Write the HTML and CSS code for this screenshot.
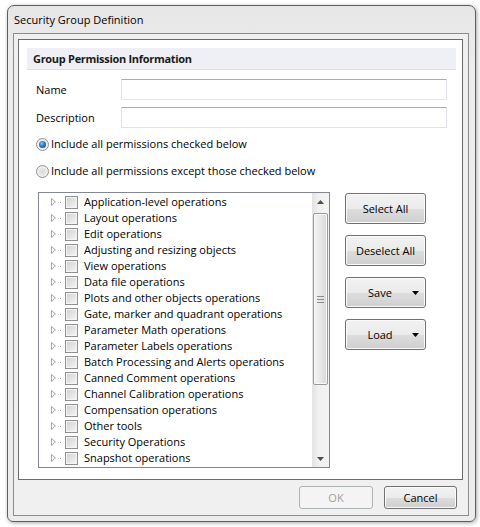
FILE: index.html
```html
<!DOCTYPE html>
<html>
<head>
<meta charset="utf-8">
<title>Security Group Definition</title>
<link rel="stylesheet" href="styles.css">
</head>
<body>
<div class="window">
  <div class="titlebar">Security Group Definition</div>
  <div class="client">
    <div class="panel">
      <div class="section-head">Group Permission Information</div>
      <div class="field-row name-row"><span class="field-label">Name</span><div class="input"></div></div>
      <div class="field-row desc-row"><span class="field-label">Description</span><div class="input"></div></div>
      <div class="radio-row r1"><span class="radio checked"></span><span class="radio-text">Include all permissions checked below</span></div>
      <div class="radio-row r2"><span class="radio"></span><span class="radio-text">Include all permissions except those checked below</span></div>
      <div class="perm-area">
        <div class="tree">
          <div class="tree-items">
            <div class="row"><svg class="exp" width="26" height="16" viewBox="0 0 26 16"><path d="M12.5 4.5 L16.5 8 L12.5 11.5 Z" fill="#fff" stroke="#a6a6a6"/><rect x="21" y="8" width="1" height="1" fill="#9a9a9a"/></svg><span class="check"></span><span class="label">Application-level operations</span></div>
            <div class="row"><svg class="exp" width="26" height="16" viewBox="0 0 26 16"><path d="M12.5 4.5 L16.5 8 L12.5 11.5 Z" fill="#fff" stroke="#a6a6a6"/><rect x="21" y="8" width="1" height="1" fill="#9a9a9a"/></svg><span class="check"></span><span class="label">Layout operations</span></div>
            <div class="row"><svg class="exp" width="26" height="16" viewBox="0 0 26 16"><path d="M12.5 4.5 L16.5 8 L12.5 11.5 Z" fill="#fff" stroke="#a6a6a6"/><rect x="21" y="8" width="1" height="1" fill="#9a9a9a"/></svg><span class="check"></span><span class="label">Edit operations</span></div>
            <div class="row"><svg class="exp" width="26" height="16" viewBox="0 0 26 16"><path d="M12.5 4.5 L16.5 8 L12.5 11.5 Z" fill="#fff" stroke="#a6a6a6"/><rect x="21" y="8" width="1" height="1" fill="#9a9a9a"/></svg><span class="check"></span><span class="label">Adjusting and resizing objects</span></div>
            <div class="row"><svg class="exp" width="26" height="16" viewBox="0 0 26 16"><path d="M12.5 4.5 L16.5 8 L12.5 11.5 Z" fill="#fff" stroke="#a6a6a6"/><rect x="21" y="8" width="1" height="1" fill="#9a9a9a"/></svg><span class="check"></span><span class="label">View operations</span></div>
            <div class="row"><svg class="exp" width="26" height="16" viewBox="0 0 26 16"><path d="M12.5 4.5 L16.5 8 L12.5 11.5 Z" fill="#fff" stroke="#a6a6a6"/><rect x="21" y="8" width="1" height="1" fill="#9a9a9a"/></svg><span class="check"></span><span class="label">Data file operations</span></div>
            <div class="row"><svg class="exp" width="26" height="16" viewBox="0 0 26 16"><path d="M12.5 4.5 L16.5 8 L12.5 11.5 Z" fill="#fff" stroke="#a6a6a6"/><rect x="21" y="8" width="1" height="1" fill="#9a9a9a"/></svg><span class="check"></span><span class="label">Plots and other objects operations</span></div>
            <div class="row"><svg class="exp" width="26" height="16" viewBox="0 0 26 16"><path d="M12.5 4.5 L16.5 8 L12.5 11.5 Z" fill="#fff" stroke="#a6a6a6"/><rect x="21" y="8" width="1" height="1" fill="#9a9a9a"/></svg><span class="check"></span><span class="label">Gate, marker and quadrant operations</span></div>
            <div class="row"><svg class="exp" width="26" height="16" viewBox="0 0 26 16"><path d="M12.5 4.5 L16.5 8 L12.5 11.5 Z" fill="#fff" stroke="#a6a6a6"/><rect x="21" y="8" width="1" height="1" fill="#9a9a9a"/></svg><span class="check"></span><span class="label">Parameter Math operations</span></div>
            <div class="row"><svg class="exp" width="26" height="16" viewBox="0 0 26 16"><path d="M12.5 4.5 L16.5 8 L12.5 11.5 Z" fill="#fff" stroke="#a6a6a6"/><rect x="21" y="8" width="1" height="1" fill="#9a9a9a"/></svg><span class="check"></span><span class="label">Parameter Labels operations</span></div>
            <div class="row"><svg class="exp" width="26" height="16" viewBox="0 0 26 16"><path d="M12.5 4.5 L16.5 8 L12.5 11.5 Z" fill="#fff" stroke="#a6a6a6"/><rect x="21" y="8" width="1" height="1" fill="#9a9a9a"/></svg><span class="check"></span><span class="label">Batch Processing and Alerts operations</span></div>
            <div class="row"><svg class="exp" width="26" height="16" viewBox="0 0 26 16"><path d="M12.5 4.5 L16.5 8 L12.5 11.5 Z" fill="#fff" stroke="#a6a6a6"/><rect x="21" y="8" width="1" height="1" fill="#9a9a9a"/></svg><span class="check"></span><span class="label">Canned Comment operations</span></div>
            <div class="row"><svg class="exp" width="26" height="16" viewBox="0 0 26 16"><path d="M12.5 4.5 L16.5 8 L12.5 11.5 Z" fill="#fff" stroke="#a6a6a6"/><rect x="21" y="8" width="1" height="1" fill="#9a9a9a"/></svg><span class="check"></span><span class="label">Channel Calibration operations</span></div>
            <div class="row"><svg class="exp" width="26" height="16" viewBox="0 0 26 16"><path d="M12.5 4.5 L16.5 8 L12.5 11.5 Z" fill="#fff" stroke="#a6a6a6"/><rect x="21" y="8" width="1" height="1" fill="#9a9a9a"/></svg><span class="check"></span><span class="label">Compensation operations</span></div>
            <div class="row"><svg class="exp" width="26" height="16" viewBox="0 0 26 16"><path d="M12.5 4.5 L16.5 8 L12.5 11.5 Z" fill="#fff" stroke="#a6a6a6"/><rect x="21" y="8" width="1" height="1" fill="#9a9a9a"/></svg><span class="check"></span><span class="label">Other tools</span></div>
            <div class="row"><svg class="exp" width="26" height="16" viewBox="0 0 26 16"><path d="M12.5 4.5 L16.5 8 L12.5 11.5 Z" fill="#fff" stroke="#a6a6a6"/><rect x="21" y="8" width="1" height="1" fill="#9a9a9a"/></svg><span class="check"></span><span class="label">Security Operations</span></div>
            <div class="row"><svg class="exp" width="26" height="16" viewBox="0 0 26 16"><path d="M12.5 4.5 L16.5 8 L12.5 11.5 Z" fill="#fff" stroke="#a6a6a6"/><rect x="21" y="8" width="1" height="1" fill="#9a9a9a"/></svg><span class="check"></span><span class="label">Snapshot operations</span></div>
          </div>
          <div class="scrollbar">
            <div class="sb-btn"><svg width="7" height="4" viewBox="0 0 7 4"><path d="M0 4 L3.5 0 L7 4 Z" fill="#4d4d4d"/></svg></div>
            <div class="sb-track">
              <div class="sb-thumb"><svg width="7" height="7" viewBox="0 0 7 7"><rect x="0" y="0" width="7" height="1" fill="#8a8a8a"/><rect x="0" y="3" width="7" height="1" fill="#8a8a8a"/><rect x="0" y="6" width="7" height="1" fill="#8a8a8a"/></svg></div>
            </div>
            <div class="sb-btn"><svg width="7" height="4" viewBox="0 0 7 4"><path d="M0 0 L7 0 L3.5 4 Z" fill="#4d4d4d"/></svg></div>
          </div>
        </div>
        <div class="side-buttons">
          <button class="btn">Select All</button>
          <button class="btn">Deselect All</button>
          <button class="btn split"><span class="btn-text">Save</span><svg class="drop" width="7" height="4" viewBox="0 0 7 4"><path d="M0 0 L7 0 L3.5 4 Z" fill="#000"/></svg></button>
          <button class="btn split"><span class="btn-text">Load</span><svg class="drop" width="7" height="4" viewBox="0 0 7 4"><path d="M0 0 L7 0 L3.5 4 Z" fill="#000"/></svg></button>
        </div>
      </div>
    </div>
    <div class="footer">
      <button class="btn foot-btn ok" disabled>OK</button>
      <button class="btn foot-btn">Cancel</button>
    </div>
  </div>
</div>
</body>
</html>
```

FILE: styles.css
```css
* { box-sizing: border-box; }
html, body { margin: 0; padding: 0; background: #ffffff; }
body {
  font-family: "Open Sans", "Noto Sans", sans-serif;
  font-size: 11px;
  color: #000;
  width: 480px;
  height: 527px;
  overflow: hidden;
}
.window {
  margin: 5px 0 0 7px;
  width: 469px;
  height: 517px;
  border: 1px solid #5d5d5d;
  border-radius: 7px 7px 6px 6px;
  background: linear-gradient(#e6e6e6, #ededed 60px, #ececec);
  box-shadow: 1px 1px 4px rgba(0,0,0,0.35);
  display: flex;
  flex-direction: column;
  padding: 0 6px 5px 5px;
}
.titlebar {
  height: 27px;
  line-height: 27px;
  padding-left: 1px;
  font-size: 11px;
  color: #000;
}
.client {
  flex: 1;
  border: 1px solid #8c8c8c;
  background: #f0f0f0;
  padding: 5px 0 0 4px;
  display: flex;
  flex-direction: column;
}
.panel {
  height: 441px;
  margin-right: 5px;
  border: 1px solid #6a6a6a;
  background: #ffffff;
  display: flex;
  flex-direction: column;
}
.section-head {
  margin: 8px 6px 0 8px;
  height: 22px;
  background: #eff0f5;
  border-bottom: 1px solid #e0e1e6;
  font-weight: bold;
  letter-spacing: -0.3px;
  padding-left: 6px;
  line-height: 21px;
  color: #1a1a1a;
}
.field-row {
  display: flex;
  align-items: center;
  height: 21px;
  margin-right: 15px;
}
.name-row { margin-top: 9px; }
.desc-row { margin-top: 7px; }
.field-label {
  width: 102px;
  padding-left: 17px;
}
.input {
  flex: 1;
  height: 21px;
  border: 1px solid #e2e3ea;
  border-top-color: #abadb3;
  background: #fff;
}
.radio-row {
  display: flex;
  align-items: center;
  height: 16px;
  padding-left: 17px;
}
.r1 { margin-top: 8px; }
.r2 { margin-top: 11px; }
.radio {
  width: 13px;
  height: 13px;
  border-radius: 50%;
  border: 1px solid #8e8f8f;
  background: radial-gradient(circle at 50% 50%, #d8d8d8 0, #eaeaea 50%, #f6f6f6 100%);
  box-shadow: inset 0 0 0 1px #f2f2f2;
  position: relative;
  flex: none;
}
.radio.checked::after {
  content: "";
  position: absolute;
  left: 2px;
  top: 2px;
  width: 7px;
  height: 7px;
  border-radius: 50%;
  background: radial-gradient(circle at 40% 35%, #8cc6f5 0, #2a77c9 45%, #0d4a94 100%);
}
.radio-text { margin-left: 2px; padding-bottom: 1px; }
.perm-area {
  display: flex;
  margin-top: 13px;
  margin-left: 19px;
}
.tree {
  width: 292px;
  height: 276px;
  border: 1px solid #828790;
  display: flex;
}
.tree-items {
  flex: 1;
  padding-top: 1px;
  overflow: hidden;
}
.row {
  height: 16px;
  display: flex;
  align-items: center;
  white-space: nowrap;
}
.exp { flex: none; display: block; }
.check {
  width: 13px;
  height: 13px;
  border: 1px solid #8e8f8f;
  background: linear-gradient(135deg, #cfcfcf, #f6f6f6);
  box-shadow: inset 0 0 0 1px #f4f4f4;
  flex: none;
}
.label { margin-left: 6px; padding-bottom: 2px; }
.scrollbar {
  width: 17px;
  display: flex;
  flex-direction: column;
  background: linear-gradient(90deg, #e3e3e3, #f1f1f1 40%, #f3f3f3);
}
.sb-btn {
  height: 17px;
  display: flex;
  align-items: center;
  justify-content: center;
  flex: none;
}
.sb-btn svg { display: block; }
.sb-track {
  flex: 1;
  padding: 3px 1px 0 1px;
}
.sb-thumb {
  height: 172px;
  border: 1px solid #9a9a9a;
  border-radius: 2px;
  background: linear-gradient(90deg, #f3f3f3, #e8e8e8 50%, #d7d7d7);
  box-shadow: inset 0 0 0 1px #f8f8f8;
  display: flex;
  align-items: center;
  justify-content: center;
}
.sb-thumb svg { display: block; }
.side-buttons {
  display: flex;
  flex-direction: column;
  gap: 11px;
  margin-left: 15px;
  margin-top: 1px;
}
.btn {
  font-family: inherit;
  font-size: 11px;
  color: #000;
  width: 81px;
  height: 31px;
  border: 1px solid #707070;
  border-radius: 3px;
  background: linear-gradient(#f2f2f2, #ebebeb 50%, #dddddd 51%, #cfcfcf);
  box-shadow: inset 0 0 0 1px #fbfbfb;
  padding: 0;
  margin: 0;
}
.btn.split {
  display: flex;
  align-items: center;
  padding: 0 6px 0 6px;
}
.btn-text { flex: 1; text-align: center; }
.drop { flex: none; display: block; margin-left: 4px; }
.footer {
  flex: 1;
  display: flex;
  justify-content: flex-end;
  align-items: flex-start;
  gap: 11px;
  padding: 6px 11px 0 0;
}
.foot-btn {
  width: 73px;
  height: 23px;
}
.ok {
  width: 74px;
  border-color: #adb2b5;
  background: #f4f4f4;
  box-shadow: none;
  color: #a0a0a0;
}
```
